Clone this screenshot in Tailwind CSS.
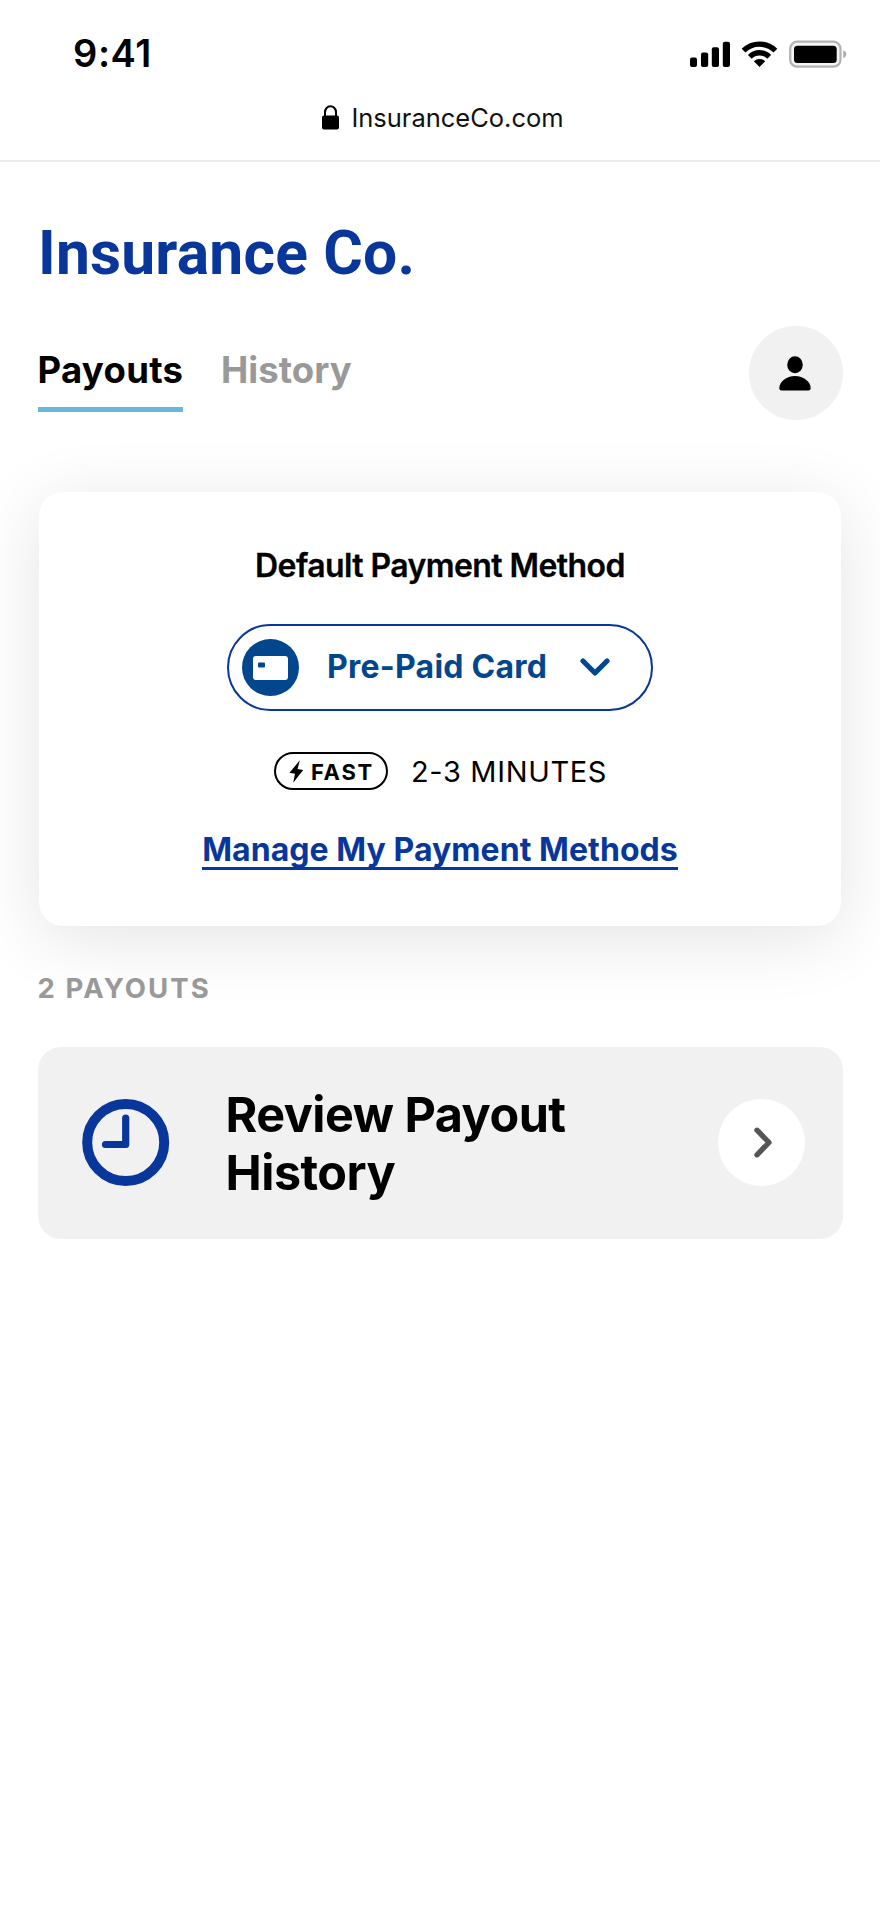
<!DOCTYPE html>
<html lang="en">
<head>
<meta charset="utf-8">
<title>Insurance Co.</title>
<script src="https://cdn.jsdelivr.net/npm/@tailwindcss/browser@4"></script>
</head>
<body class="bg-white text-black font-['Inter',sans-serif]">
<div class="w-[880px] h-[1906px] overflow-hidden">
  <header class="h-[162px] border-b-2 border-[#ededed]">
    <div class="h-[105px] flex items-center justify-between pl-[73px] pr-[32px]">
      <span class="text-[38px] font-semibold leading-none tracking-[0.6px]">9:41</span>
      <svg width="160" height="34" viewBox="688 35.5 160 34" fill="none">
        <g fill="#000">
          <rect x="690" y="57" width="7" height="9.5" rx="2"/>
          <rect x="701" y="52" width="7.2" height="14.5" rx="2"/>
          <rect x="711.8" y="46.8" width="7.2" height="19.7" rx="2"/>
          <rect x="722.8" y="41.3" width="7.2" height="25.2" rx="2"/>
        </g>
        <g stroke="#000" stroke-width="5.4">
          <path d="M743.6 50.2A22.5 22.5 0 0 1 775.4 50.2"/>
          <path d="M749.8 56.3A13.8 13.8 0 0 1 769.2 56.3"/>
        </g>
        <path d="M753.8 60.7A8.5 8.5 0 0 1 765.2 60.7L759.5 66.4Z" fill="#000"/>
        <rect x="790.2" y="41.2" width="50.3" height="25" rx="7" fill="#f4f4f4" stroke="#b2b2b2" stroke-width="2.2"/>
        <rect x="794" y="45.2" width="42.7" height="17.3" rx="3.5" fill="#000"/>
        <path d="M843.3 49.8C847.2 51.2 847.2 56.3 843.3 57.7Z" fill="#a9a9a9"/>
      </svg>
    </div>
    <div class="h-[26px] flex items-center pl-[321px] gap-[11.5px]">
      <svg width="19" height="26" viewBox="0 0 19 26" fill="none">
        <path d="M4 12V7.2a5.5 6 0 0 1 11 0v4.8" stroke="#000" stroke-width="2"/>
        <rect x="1" y="10.5" width="17" height="14" rx="2" fill="#000"/>
      </svg>
      <span class="text-[25.5px] leading-none text-[#111] tracking-[-0.02px]">InsuranceCo.com</span>
    </div>
  </header>

  <main class="px-[37.5px]">
    <h1 class="mt-[62px] h-[60px] leading-[60px] font-['Roboto',sans-serif] font-bold text-[60.5px] tracking-[0.2px] pl-[0.5px] text-[#08369b]">Insurance Co.</h1>

    <div class="mt-[42px] h-[94px] flex justify-between items-start">
      <nav class="mt-[23px] flex gap-[38px] text-[36.5px] font-bold leading-[43px]">
        <a class="w-[145.5px] pb-[15px] border-b-5 border-[#66b8df] tracking-[0.3px]">Payouts</a>
        <a class="text-[#999] tracking-[0.05px]">History</a>
      </nav>
      <div class="size-[94px] rounded-full bg-[#f1f1f1] flex items-center justify-center pr-[2px]">
        <svg width="32" height="35" viewBox="0 0 32 35" fill="#000">
          <ellipse cx="16" cy="8.8" rx="7.8" ry="8.5"/>
          <path d="M16 20C7.5 20 0.3 25.8 0.3 32.2Q0.3 34.5 2.6 34.5H29.4Q31.7 34.5 31.7 32.2C31.7 25.8 24.5 20 16 20Z"/>
        </svg>
      </div>
    </div>

    <section class="mt-[72px] mx-[1.5px] h-[434px] rounded-[24px] bg-white shadow-[0_12px_70px_rgba(0,0,0,0.11)] flex flex-col items-center pt-[53px]">
      <h2 class="h-[40px] leading-[42px] text-[32px] font-semibold tracking-[-0.58px] [-webkit-text-stroke:0.3px_black]">Default Payment Method</h2>
      <button class="mt-[39px] w-[426px] h-[87px] rounded-full border-2 border-[#08369b] flex items-center pl-[13px] text-[#02468e]">
        <span class="size-[57px] rounded-full bg-[#02468e] flex items-center justify-center">
          <svg width="35" height="24" viewBox="0 0 35 24"><rect width="35" height="24" rx="3" fill="#fff"/><rect x="5" y="6.5" width="7" height="5" rx="1" fill="#02468e"/></svg>
        </span>
        <span class="ml-[28px] w-[224px] pb-[2px] text-left text-[32px] font-bold leading-none tracking-[0.25px] whitespace-nowrap">Pre-Paid Card</span>
        <svg class="ml-[29px]" width="30" height="19" viewBox="0 0 30 19" fill="none" stroke="#02468e" stroke-width="5.2" stroke-linecap="round" stroke-linejoin="round"><path d="M3 3L15 15L27 3"/></svg>
      </button>
      <div class="mt-[41px] w-[332px] h-[38px] flex items-center">
        <span class="w-[114px] shrink-0 h-[38px] rounded-full border-2 border-black flex items-center pl-[13px] gap-[7px]">
          <svg class="shrink-0" width="15" height="23" viewBox="0 0 15 23" fill="#000"><path d="M10.8 0.3L0.5 12.8L6 13.8L4.2 22.7L14.2 10L8.6 9Z"/></svg>
          <span class="pt-[2px] text-[22px] font-bold leading-none tracking-[1.7px]">FAST</span>
        </span>
        <span class="ml-[23px] text-[29px] leading-none tracking-[0.65px] whitespace-nowrap">2-3 MINUTES</span>
      </div>
      <a class="mt-[42px] h-[38px] leading-[35px] text-[32px] font-bold tracking-[0.06px] text-[#08369b] border-b-3 border-[#08369b]">Manage My Payment Methods</a>
    </section>

    <p class="mt-[46px] h-[30px] leading-[32px] text-[27.5px] font-bold tracking-[2.1px] text-[#999]">2 PAYOUTS</p>

    <section class="mt-[44.5px] h-[192.5px] rounded-[23px] bg-[#f1f1f1] flex items-center pl-[44px] pr-[37.5px]">
      <svg width="88" height="88" viewBox="0 0 88 88" fill="none" stroke="#08369b"><circle cx="43.7" cy="43.5" r="38.5" stroke-width="10"/><path d="M43.7 19V45.5H23.5" stroke-width="7.2" stroke-linecap="round" stroke-linejoin="round"/></svg>
      <h3 class="ml-[56px] flex-1 pt-[3px] text-[48.5px] leading-[58.6px] font-bold tracking-[-0.5px]">Review Payout<br>History</h3>
      <span class="size-[87px] rounded-full bg-white flex items-center justify-center">
        <svg width="20" height="32" viewBox="0 0 20 32" fill="none" stroke="#555" stroke-width="5.3" stroke-linecap="round" stroke-linejoin="round"><path d="M5 3.2L17 15.5L5 27.8"/></svg>
      </span>
    </section>
  </main>
</div>
</body>
</html>
